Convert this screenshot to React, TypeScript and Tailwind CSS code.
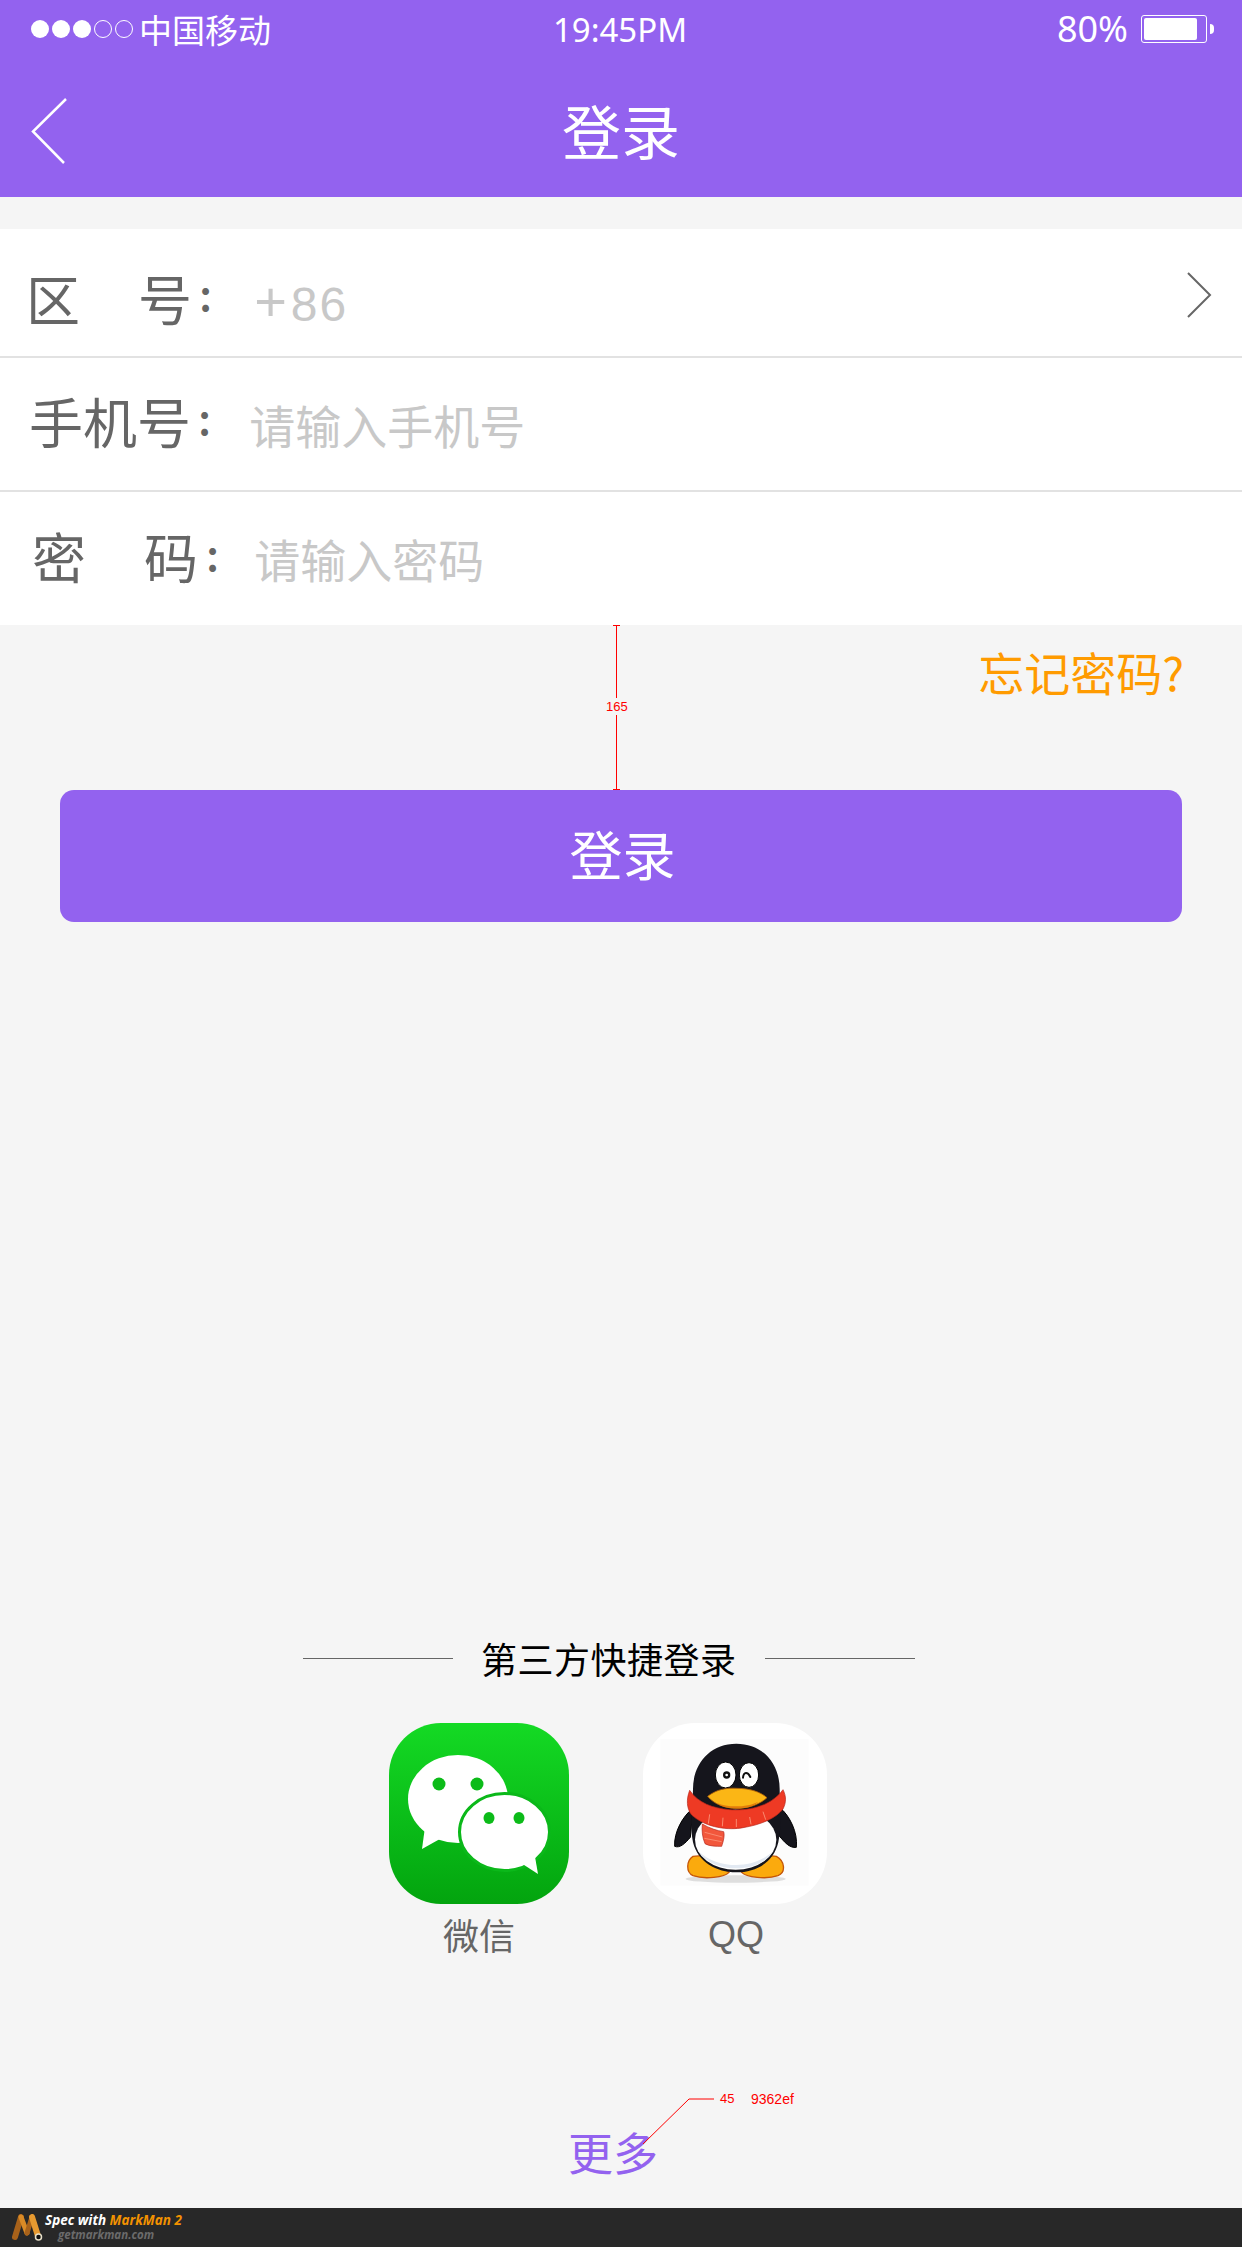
const plusValue = (
  <>
    <span className="text-[56px]">+</span>
    <span className="ml-[4px] text-[48px] tracking-[2px]">86</span>
  </>
);

const fields = [
  { first: "区", second: "号", value: plusValue, rowClass: "h-[129px] pt-[10px] pl-[26px]", gapClass: "ml-[58px]", colonClass: "ml-[7px] mb-[12px]", valueClass: "ml-[42px] text-[#c8c8c8] font-['Liberation_Sans',sans-serif] mt-[8px]" },
  { first: "手", second: "机号", value: "请输入手机号", rowClass: "h-[134px] pl-[29px] pb-[6px]", gapClass: "", colonClass: "ml-[7px] mb-[10px]", valueClass: "ml-[38px] text-[#c8c8c8] text-[46px] mt-[6px]" },
  { first: "密", second: "码", value: "请输入密码", rowClass: "h-[133px] pl-[32px] pb-[6px]", gapClass: "ml-[58px]", colonClass: "ml-[8px] mb-[8px]", valueClass: "ml-[35px] text-[#c8c8c8] text-[46px] mt-[4px]" },
];

function StatusBar() {
  return (
    <div className="flex h-[58px] items-center justify-between pl-[31px] pr-[28px] text-white">
      <div className="flex w-[400px] items-center">
        <div className="flex gap-[3px]">
          {[0, 1, 2].map((i) => (
            <span key={i} className="h-[18px] w-[18px] rounded-full bg-white" />
          ))}
          {[3, 4].map((i) => (
            <span key={i} className="h-[18px] w-[18px] rounded-full border border-white" />
          ))}
        </div>
        <span className="ml-[6px] text-[33px] leading-none">中国移动</span>
      </div>
      <span className="mr-[5px] text-[33px] leading-none font-['Noto_Sans',sans-serif]">19:45PM</span>
      <div className="flex w-[400px] items-center justify-end">
        <span className="mr-[13px] text-[36px] leading-none font-['Noto_Sans',sans-serif]">80%</span>
        <div className="flex h-[28px] w-[66px] items-center rounded-[3px] border border-white p-[2px]">
          <div className="h-full w-[53px] rounded-[2px] bg-white" />
        </div>
        <div className="ml-[3px] h-[10px] w-[4px] rounded-r-full bg-white" />
      </div>
    </div>
  );
}

function BackChevron() {
  return (
    <svg width="40" height="70" viewBox="0 0 40 70" fill="none" stroke="#fff" strokeWidth="2.5" className="absolute left-[31px] top-[40px]">
      <path d="M35 1 L2 33.500 L33 65" />
    </svg>
  );
}

function Penguin() {
  return (
    <svg width="184" height="181" viewBox="40 42 552 543">
      <rect x="92" y="90" width="445" height="440" fill="#fcfcfc" />
      <ellipse cx="318" cy="510" rx="150" ry="11" fill="#c9c9c9" opacity="0.6" />
      {/* wings */}
      <path d="M190 298 C160 320 132 370 135 412 C150 418 165 405 182 385 Z" fill="#15151c" stroke="#000" strokeWidth="3" />
      <path d="M450 295 C480 320 505 370 500 415 C480 418 465 400 448 380 Z" fill="#15151c" stroke="#000" strokeWidth="3" />
      {/* feet */}
      <path d="M190 442 C170 455 168 490 190 500 C225 512 285 505 298 490 C285 478 240 465 215 440 Z" fill="#fbaa0d" stroke="#c4560a" strokeWidth="4" />
      <path d="M440 442 C465 455 470 490 445 500 C410 512 350 505 336 490 C350 478 395 465 420 440 Z" fill="#fbaa0d" stroke="#c4560a" strokeWidth="4" />
      {/* body */}
      <path d="M320 104 C240 104 190 165 190 240 C190 290 178 340 190 400 C205 460 260 490 320 490 C380 490 432 460 446 400 C458 340 450 290 450 240 C450 165 400 104 320 104 Z" fill="#15151c" />
      <ellipse cx="318" cy="392" rx="122" ry="90" fill="#fff" />
      <path d="M205 425 C235 470 290 478 320 478 C370 478 410 460 432 425 C400 455 360 468 320 468 C280 468 235 455 205 425 Z" fill="#e2e9f2" />
      {/* eyes */}
      <ellipse cx="288" cy="198" rx="31" ry="39" fill="#fff" stroke="#000" strokeWidth="3" />
      <ellipse cx="358" cy="198" rx="29" ry="37" fill="#fff" stroke="#000" strokeWidth="3" />
      <circle cx="291" cy="198" r="11" fill="#111" />
      <circle cx="291" cy="198" r="4" fill="#fff" />
      <path d="M340 206 C342 188 354 188 362 204" fill="none" stroke="#111" strokeWidth="6" strokeLinecap="round" />
      {/* scarf */}
      <path d="M180 244 C170 270 170 298 186 318 C230 358 300 364 340 356 C395 347 440 327 460 300 C470 280 470 262 460 242 C420 296 350 306 300 302 C250 298 205 282 180 244 Z" fill="#ee3a24" stroke="#b4241a" strokeWidth="2" />
      <path d="M218 345 C240 358 262 365 282 368 C286 380 280 400 276 412 C260 412 238 412 226 404 C218 385 216 365 218 345 Z" fill="#f2573c" stroke="#b4241a" strokeWidth="2" />
      <path d="M240 316 L236 344 M280 326 L278 352 M320 330 L320 354 M360 324 L364 346 M400 308 L408 332 M225 370 L278 384 M224 388 L276 398" stroke="#f98a70" strokeWidth="3" />
      {/* beak */}
      <path d="M234 262 C262 240 292 236 322 238 C358 238 392 248 412 266 C392 285 358 298 322 298 C285 298 252 285 234 262 Z" fill="#fbb615" stroke="#a85c08" strokeWidth="2.500" />
      <path d="M262 282 C292 296 352 296 386 278 C362 304 288 306 262 282 Z" fill="#e27c0b" />
    </svg>
  );
}

function WeChat() {
  return (
    <div className="h-[181px] w-[180px] overflow-hidden rounded-[52px] bg-gradient-to-b from-[#14da24] to-[#03a40e]">
      <svg width="180" height="181" viewBox="0 0 180 181">
        <ellipse cx="69" cy="76" rx="50" ry="44" fill="#fff" />
        <path d="M36 104 L33 126 L58 112 Z" fill="#fff" />
        <ellipse cx="115.500" cy="109" rx="45" ry="38.500" fill="#fff" stroke="#0bb81a" strokeWidth="3" />
        <path d="M132 140 L149 151 L145 128 Z" fill="#fff" />
        <ellipse cx="50" cy="61" rx="6.500" ry="6.500" fill="#0cbb19" />
        <ellipse cx="88" cy="61" rx="6.500" ry="6.500" fill="#0cbb19" />
        <ellipse cx="100" cy="95" rx="5.500" ry="6" fill="#0cbb19" />
        <ellipse cx="130" cy="95" rx="5.500" ry="6" fill="#0cbb19" />
      </svg>
    </div>
  );
}

function MarkManLogo() {
  return (
    <svg width="31" height="28" viewBox="0 0 31 28">
      <path d="M9 3 L3 23" stroke="#a8621a" strokeWidth="6" strokeLinecap="round" />
      <path d="M9 3 L15 19" stroke="#d98a26" strokeWidth="5" strokeLinecap="round" />
      <path d="M20 3 L15 19" stroke="#a8621a" strokeWidth="5" strokeLinecap="round" />
      <path d="M20 3 L26 22" stroke="#e79a30" strokeWidth="6" strokeLinecap="round" />
      <circle cx="26.500" cy="23" r="3" fill="#111" stroke="#e8e0c8" strokeWidth="1.500" />
    </svg>
  );
}

export default function App() {
  return (
    <div className="relative flex h-[2247px] w-[1242px] flex-col overflow-hidden bg-[#f5f5f5] font-['Noto_Sans_CJK_SC','Noto_Sans',sans-serif]">
      <header className="h-[197px] shrink-0 bg-[#9362ef]">
        <StatusBar />
        <div className="relative flex h-[139px] items-start justify-center">
          <BackChevron />
          <span className="mt-[27px] text-[59px] leading-[90px] text-white">登录</span>
        </div>
      </header>

      <section className="mt-[32px] divide-y-2 divide-[#e2e2e2] bg-white">
        {fields.map((f, i) => (
          <div key={f.first} className={`relative flex items-center ${f.rowClass}`}>
            <span className="text-[54px] leading-none text-[#666666]">{f.first}</span>
            <span className={`text-[54px] leading-none text-[#666666] ${f.gapClass}`}>{f.second}</span>
            <span className={`text-[44px] font-medium leading-none text-[#666666] ${f.colonClass}`}>:</span>
            <span className={`leading-none ${f.valueClass}`}>{f.value}</span>
            {i === 0 && (
              <svg width="26" height="48" viewBox="0 0 26 48" fill="none" stroke="#666666" strokeWidth="2" className="absolute right-[30px] top-[42px]">
                <path d="M2 2 L24 24 L2 46" />
              </svg>
            )}
          </div>
        ))}
      </section>

      <div className="flex h-[165px] shrink-0 justify-end pr-[58px] pt-[19px]">
        <span className="text-[46px] leading-[54px] text-[#ff9b00]">忘记密码?</span>
      </div>

      <button className="mx-[60px] flex h-[132px] shrink-0 items-center justify-center rounded-[14px] bg-[#9362ef] pb-[4px] pl-[3px] text-[53px] text-white">
        登录
      </button>

      <div className="mt-[710px] flex h-[52px] shrink-0 items-center pl-[303px]">
        <div className="h-px w-[150px] bg-[#666666]" />
        <span className="ml-[28px] w-[254px] whitespace-nowrap text-[36px] leading-none tracking-[0.5px] text-black">第三方快捷登录</span>
        <div className="ml-[30px] h-px w-[150px] bg-[#666666]" />
      </div>

      <div className="mt-[39px] flex shrink-0 items-start pl-[389px]">
        <div className="flex w-[180px] flex-col items-center">
          <WeChat />
          <span className="mt-[6px] text-[36px] leading-[48px] text-[#666666]">微信</span>
        </div>
        <div className="ml-[74px] flex w-[184px] flex-col items-center">
          <div className="h-[181px] w-[184px] overflow-hidden rounded-[52px] bg-white">
            <Penguin />
          </div>
          <span className="mt-[7px] pl-[2px] text-[36px] leading-[48px] text-[#666666] font-['Liberation_Sans',sans-serif]">QQ</span>
        </div>
      </div>

      <div className="mt-[163px] flex shrink-0 pl-[568px]">
        <span className="text-[45px] leading-[60px] text-[#9362ef]">更多</span>
      </div>

      <footer className="mt-auto flex h-[39px] shrink-0 items-center bg-[#282828] pl-[12px]">
        <MarkManLogo />
        <div className="ml-[2px] flex flex-col font-['Open_Sans',sans-serif] font-bold italic">
          <span className="text-[13.500px] leading-[15px] text-white">
            Spec with <span className="text-[#f39200]">MarkMan 2</span>
          </span>
          <span className="ml-[13px] text-[11.500px] leading-[14px] text-[#6b6b6b]">getmarkman.com</span>
        </div>
      </footer>

      {/* MarkMan measurement overlays */}
      <div className="absolute left-[616px] top-[625px] h-[165px] w-px bg-[#ff0000]" />
      <div className="absolute left-[613px] top-[625px] h-px w-[7px] bg-[#ff0000]" />
      <div className="absolute left-[613px] top-[789px] h-px w-[7px] bg-[#ff0000]" />
      <span className="absolute left-[604px] top-[698px] bg-[#f5f5f5] px-[2px] font-['Liberation_Sans',sans-serif] text-[13px] leading-[17px] text-[#ff0000]">165</span>
      <svg width="80" height="50" viewBox="0 0 80 50" fill="none" stroke="#ff0000" className="absolute left-[640px] top-[2097px]">
        <path d="M3 47 L49 2 L74 2" />
      </svg>
      <span className="absolute left-[720px] top-[2091px] font-['Liberation_Sans',sans-serif] text-[13px] leading-[16px] text-[#ff0000]">45</span>
      <span className="absolute left-[751px] top-[2091px] font-['Liberation_Sans',sans-serif] text-[14px] leading-[16px] text-[#ff0000]">9362ef</span>
    </div>
  );
}
